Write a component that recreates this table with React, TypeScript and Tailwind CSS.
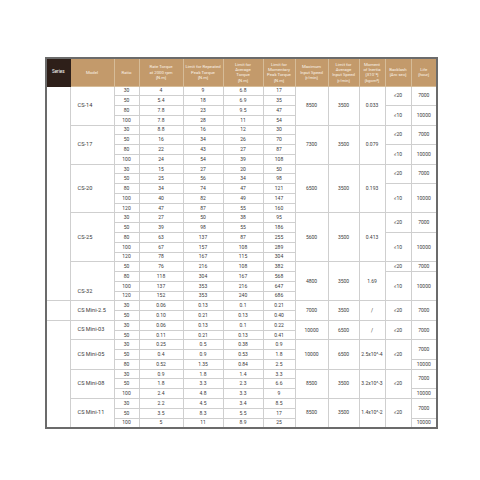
import React from "react";

type Span = { v: string; span: number };
type Group = {
  model: string;
  ratios: string[];
  rated: string[];
  rep: string[];
  avg: string[];
  mom: string[];
  maxSpd: string;
  avgSpd: string;
  inertia: string;
  backlash: Span[];
  life: Span[];
  labelBottom?: boolean;
};

const groups: Group[] = [
  {
    model: "CS-14",
    ratios: ["30", "50", "80", "100"],
    rated: ["4", "5.4", "7.8", "7.8"],
    rep: ["9", "18", "23", "28"],
    avg: ["6.8", "6.9", "9.5", "11"],
    mom: ["17", "35", "47", "54"],
    maxSpd: "8500",
    avgSpd: "3500",
    inertia: "0.033",
    backlash: [{ v: "≤20", span: 2 }, { v: "≤10", span: 2 }],
    life: [{ v: "7000", span: 2 }, { v: "10000", span: 2 }],
  },
  {
    model: "CS-17",
    ratios: ["30", "50", "80", "100"],
    rated: ["8.8", "16", "22", "24"],
    rep: ["16", "34", "43", "54"],
    avg: ["12", "26", "27", "39"],
    mom: ["30", "70", "87", "108"],
    maxSpd: "7300",
    avgSpd: "3500",
    inertia: "0.079",
    backlash: [{ v: "≤20", span: 2 }, { v: "≤10", span: 2 }],
    life: [{ v: "7000", span: 2 }, { v: "10000", span: 2 }],
  },
  {
    model: "CS-20",
    ratios: ["30", "50", "80", "100", "120"],
    rated: ["15", "25", "34", "40", "47"],
    rep: ["27", "56", "74", "82", "87"],
    avg: ["20", "34", "47", "49", "55"],
    mom: ["50", "98", "121", "147", "160"],
    maxSpd: "6500",
    avgSpd: "3500",
    inertia: "0.193",
    backlash: [{ v: "≤20", span: 2 }, { v: "≤10", span: 3 }],
    life: [{ v: "7000", span: 2 }, { v: "10000", span: 3 }],
  },
  {
    model: "CS-25",
    ratios: ["30", "50", "80", "100", "120"],
    rated: ["27", "39", "63", "67", "78"],
    rep: ["50", "98", "137", "157", "167"],
    avg: ["38", "55", "87", "108", "115"],
    mom: ["95", "186", "255", "289", "304"],
    maxSpd: "5600",
    avgSpd: "3500",
    inertia: "0.413",
    backlash: [{ v: "≤20", span: 2 }, { v: "≤10", span: 3 }],
    life: [{ v: "7000", span: 2 }, { v: "10000", span: 3 }],
  },
  {
    model: "CS-32",
    ratios: ["50", "80", "100", "120"],
    rated: ["76", "118", "137", "152"],
    rep: ["216", "304", "353", "353"],
    avg: ["108", "167", "216", "240"],
    mom: ["382", "568", "647", "686"],
    maxSpd: "4800",
    avgSpd: "3500",
    inertia: "1.69",
    backlash: [{ v: "≤20", span: 1 }, { v: "≤10", span: 3 }],
    life: [{ v: "7000", span: 1 }, { v: "10000", span: 3 }],
    labelBottom: true,
  },
  {
    model: "CS Mini-2.5",
    ratios: ["30", "50"],
    rated: ["0.06", "0.10"],
    rep: ["0.13", "0.21"],
    avg: ["0.1", "0.13"],
    mom: ["0.21", "0.40"],
    maxSpd: "7000",
    avgSpd: "3500",
    inertia: "/",
    backlash: [{ v: "≤20", span: 2 }],
    life: [{ v: "7000", span: 2 }],
  },
  {
    model: "CS Mini-03",
    ratios: ["30", "50"],
    rated: ["0.06", "0.11"],
    rep: ["0.13", "0.21"],
    avg: ["0.1", "0.13"],
    mom: ["0.22", "0.41"],
    maxSpd: "10000",
    avgSpd: "6500",
    inertia: "/",
    backlash: [{ v: "≤20", span: 2 }],
    life: [{ v: "7000", span: 2 }],
  },
  {
    model: "CS Mini-05",
    ratios: ["30", "50", "80"],
    rated: ["0.25", "0.4", "0.52"],
    rep: ["0.5", "0.9", "1.35"],
    avg: ["0.38", "0.53", "0.84"],
    mom: ["0.9", "1.8", "2.5"],
    maxSpd: "10000",
    avgSpd: "6500",
    inertia: "2.5x10^-4",
    backlash: [{ v: "≤20", span: 3 }],
    life: [{ v: "7000", span: 2 }, { v: "10000", span: 1 }],
  },
  {
    model: "CS Mini-08",
    ratios: ["30", "50", "100"],
    rated: ["0.9", "1.8", "2.4"],
    rep: ["1.8", "3.3", "4.8"],
    avg: ["1.4", "2.3", "3.3"],
    mom: ["3.3", "6.6", "9"],
    maxSpd: "8500",
    avgSpd: "3500",
    inertia: "3.2x10^-3",
    backlash: [{ v: "≤20", span: 3 }],
    life: [{ v: "7000", span: 2 }, { v: "10000", span: 1 }],
  },
  {
    model: "CS Mini-11",
    ratios: ["30", "50", "100"],
    rated: ["2.2", "3.5", "5"],
    rep: ["4.5", "8.3", "11"],
    avg: ["3.4", "5.5", "8.9"],
    mom: ["8.5", "17", "25"],
    maxSpd: "8500",
    avgSpd: "3500",
    inertia: "1.4x10^-2",
    backlash: [{ v: "≤20", span: 3 }],
    life: [{ v: "7000", span: 2 }, { v: "10000", span: 1 }],
  },
];

const seriesSpans: Record<number, { span: number; noRight?: boolean }> = {
  0: { span: 22 },
  5: { span: 2, noRight: true },
  6: { span: 11 },
};

const widths = [24, 44, 25, 44, 40, 40, 32, 33, 31, 26, 26, 26];

const headers: string[][] = [
  ["Model"],
  ["Ratio"],
  ["Rate Torque", "at 2000 rpm", "[N.m]"],
  ["Limit for Repeated", "Peak Torque", "[N.m]"],
  ["Limit for", "Average", "Torque", "[N.m]"],
  ["Limit for", "Momentary", "Peak Torque", "[N.m]"],
  ["Maximum", "Input Speed", "[r/min]"],
  ["Limit for", "Average", "Input Speed", "[r/min]"],
  ["Moment", "of Inertia", "[X10⁻⁴]", "[kgcm²]"],
  ["Backlash", "[Arc sec]"],
  ["Life", "[hour]"],
];

const cell = "border border-[#cfcfcf] p-0 text-center align-middle leading-none whitespace-nowrap";

function spanStarts(spans: Span[]) {
  const m: Record<number, Span> = {};
  let r = 0;
  for (const s of spans) {
    m[r] = s;
    r += s.span;
  }
  return m;
}

export default function App() {
  const rows: React.ReactNode[] = [];
  groups.forEach((g, gi) => {
    const bl = spanStarts(g.backlash);
    const lf = spanStarts(g.life);
    const n = g.ratios.length;
    for (let i = 0; i < n; i++) {
      const s = i === 0 ? seriesSpans[gi] : undefined;
      rows.push(
        <tr key={`${gi}-${i}`} className="h-[9.78px]">
          {s && (
            <td
              rowSpan={s.span}
              className={
                s.noRight
                  ? "border border-r-0 border-[#cfcfcf] p-0"
                  : "border border-[#cfcfcf] p-0"
              }
            />
          )}
          {i === 0 && (
            <td
              rowSpan={n}
              className={`border border-[#cfcfcf] pl-[7px] text-left text-[5.6px] leading-none whitespace-nowrap ${
                g.labelBottom ? "align-bottom pb-[6px]" : "align-middle"
              }`}
            >
              {g.model}
            </td>
          )}
          <td className={cell}>{g.ratios[i]}</td>
          <td className={cell}>{g.rated[i]}</td>
          <td className={cell}>{g.rep[i]}</td>
          <td className={cell}>{g.avg[i]}</td>
          <td className={cell}>{g.mom[i]}</td>
          {i === 0 && (
            <>
              <td rowSpan={n} className={cell}>
                {g.maxSpd}
              </td>
              <td rowSpan={n} className={cell}>
                {g.avgSpd}
              </td>
              <td rowSpan={n} className={cell}>
                {g.inertia}
              </td>
            </>
          )}
          {bl[i] && (
            <td rowSpan={bl[i].span} className={cell}>
              {bl[i].v}
            </td>
          )}
          {lf[i] && (
            <td rowSpan={lf[i].span} className={cell}>
              {lf[i].v}
            </td>
          )}
        </tr>
      );
    }
  });

  return (
    <div
      className="w-[480px] h-[480px] bg-white pt-[57px] pl-[45px] text-[#3a3a3a]"
      style={{ fontFamily: "Roboto, 'Liberation Sans', sans-serif" }}
    >
      <table className="table-fixed border-collapse border-2 border-[#6b6b6b] w-[392px] text-[5px]">
        <colgroup>
          {widths.map((w, i) => (
            <col key={i} style={{ width: w }} />
          ))}
        </colgroup>
        <thead>
          <tr className="h-[28px]">
            <th className="bg-[#2e1f19] text-white font-normal text-[4.6px] border border-[#2e1f19] p-0 leading-none">
              Series
            </th>
            {headers.map((h, i) => (
              <th
                key={i}
                className="bg-[#c39a6b] text-[#fbf3e8] font-normal text-[4.3px] leading-[5.3px] border border-[#d6bc98] p-0 align-middle"
              >
                {h.map((l, j) => (
                  <div key={j} className="whitespace-nowrap">
                    {l}
                  </div>
                ))}
              </th>
            ))}
          </tr>
        </thead>
        <tbody>{rows}</tbody>
      </table>
    </div>
  );
}
